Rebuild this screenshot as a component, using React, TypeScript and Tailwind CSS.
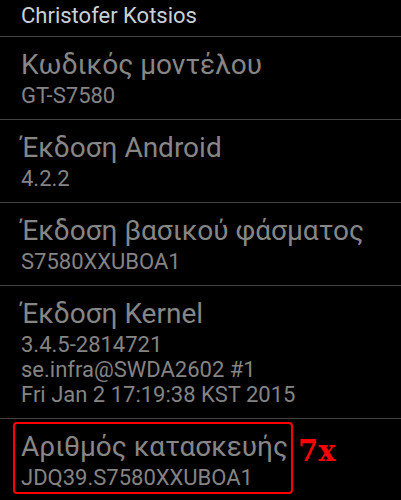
type Row = {
  title: string
  lines: string[]
}

const rows: Row[] = [
  { title: 'Κωδικός μοντέλου', lines: ['GT-S7580'] },
  { title: 'Έκδοση Android', lines: ['4.2.2'] },
  { title: 'Έκδοση βασικού φάσματος', lines: ['S7580XXUBOA1'] },
  {
    title: 'Έκδοση Kernel',
    lines: ['3.4.5-2814721', 'se.infra@SWDA2602 #1', 'Fri Jan 2 17:19:38 KST 2015'],
  },
  { title: 'Αριθμός κατασκευής', lines: ['JDQ39.S7580XXUBOA1'] },
]

const InfoRow = ({ title, lines }: Row) => {
  return (
    <div className="border-t border-[#444] pl-[21px] pt-[13px] pb-[11px]">
      <div className="text-[28px] leading-[30px] text-[#868686] whitespace-nowrap">
        {title}
      </div>
      <div className="mt-[3px] text-[22px] leading-[25px] text-[#848484]">
        {lines.map((line) => (
          <div key={line} className="whitespace-nowrap">
            {line}
          </div>
        ))}
      </div>
    </div>
  )
}

export default function App() {
  return (
    <div className="relative h-[500px] w-[401px] overflow-hidden bg-black font-['Roboto','Noto_Sans',sans-serif]">
      <div className="h-[36px] pl-[21px] pt-[3px] text-[22px] leading-[25px] text-[#c9d2d6]">
        Christofer Kotsios
      </div>
      {rows.map((row) => (
        <InfoRow key={row.title} {...row} />
      ))}

      {/* annotation over the build number */}
      <div className="absolute left-[13px] top-[422px] h-[72px] w-[280px] rounded-[4px] border-2 border-[#ff0000]" />
      <div className="absolute left-[298px] top-[434px] font-['DejaVu_Serif',serif] text-[29px] font-bold leading-[34px] text-[#ff0000]">
        7x
      </div>
    </div>
  )
}
